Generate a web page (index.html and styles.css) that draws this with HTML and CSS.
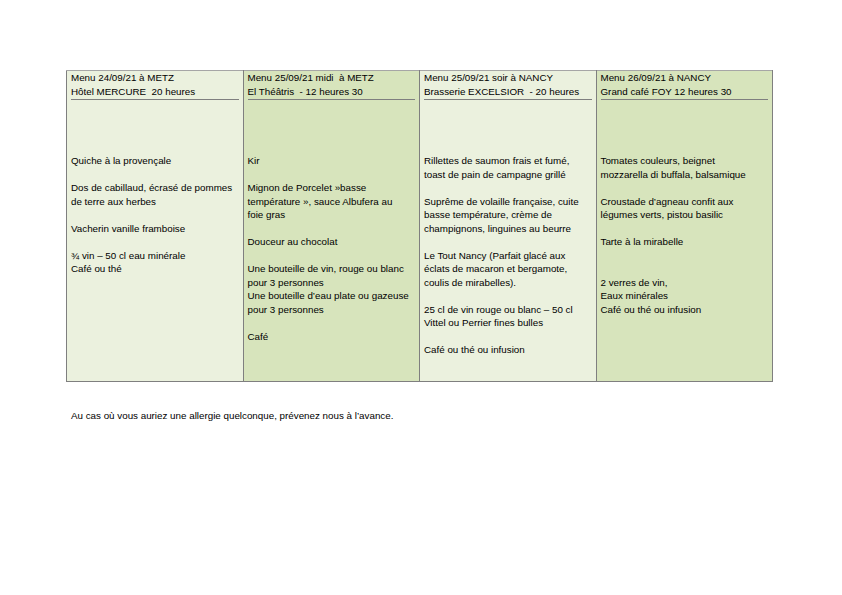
FILE: index.html
```html
<!DOCTYPE html>
<html lang="fr">
<head>
<meta charset="utf-8">
<title>Menus</title>
<link rel="stylesheet" href="styles.css">
</head>
<body>
<div class="page">
  <table class="menus">
    <tr>
      <td class="light">
        <div class="head"><div>Menu 24/09/21 à METZ</div><div>Hôtel MERCURE&nbsp; 20 heures</div></div>
        <div class="body">
          <div>Quiche à la provençale</div>
          <div class="blank"></div>
          <div>Dos de cabillaud, écrasé de pommes</div>
          <div>de terre aux herbes</div>
          <div class="blank"></div>
          <div>Vacherin vanille framboise</div>
          <div class="blank"></div>
          <div>¾ vin – 50 cl eau minérale</div>
          <div>Café ou thé</div>
        </div>
      </td>
      <td class="dark">
        <div class="head"><div>Menu 25/09/21 midi&nbsp; à METZ</div><div>El Théâtris&nbsp; - 12 heures 30</div></div>
        <div class="body">
          <div>Kir</div>
          <div class="blank"></div>
          <div>Mignon de Porcelet »basse</div>
          <div>température », sauce Albufera au</div>
          <div>foie gras</div>
          <div class="blank"></div>
          <div>Douceur au chocolat</div>
          <div class="blank"></div>
          <div>Une bouteille de vin, rouge ou blanc</div>
          <div>pour 3 personnes</div>
          <div>Une bouteille d’eau plate ou gazeuse</div>
          <div>pour 3 personnes</div>
          <div class="blank"></div>
          <div>Café</div>
        </div>
      </td>
      <td class="light">
        <div class="head"><div>Menu 25/09/21 soir à NANCY</div><div>Brasserie EXCELSIOR&nbsp; - 20 heures</div></div>
        <div class="body">
          <div>Rillettes de saumon frais et fumé,</div>
          <div>toast de pain de campagne grillé</div>
          <div class="blank"></div>
          <div>Suprême de volaille française, cuite</div>
          <div>basse température, crème de</div>
          <div>champignons, linguines au beurre</div>
          <div class="blank"></div>
          <div>Le Tout Nancy (Parfait glacé aux</div>
          <div>éclats de macaron et bergamote,</div>
          <div>coulis de mirabelles).</div>
          <div class="blank"></div>
          <div>25 cl de vin rouge ou blanc – 50 cl</div>
          <div>Vittel ou Perrier fines bulles</div>
          <div class="blank"></div>
          <div>Café ou thé ou infusion</div>
        </div>
      </td>
      <td class="dark">
        <div class="head"><div>Menu 26/09/21 à NANCY</div><div>Grand café FOY 12 heures 30</div></div>
        <div class="body">
          <div>Tomates couleurs, beignet</div>
          <div>mozzarella di buffala, balsamique</div>
          <div class="blank"></div>
          <div>Croustade d’agneau confit aux</div>
          <div>légumes verts, pistou basilic</div>
          <div class="blank"></div>
          <div>Tarte à la mirabelle</div>
          <div class="blank"></div>
          <div class="blank"></div>
          <div>2 verres de vin,</div>
          <div>Eaux minérales</div>
          <div>Café ou thé ou infusion</div>
        </div>
      </td>
    </tr>
  </table>
  <p class="note">Au cas où vous auriez une allergie quelconque, prévenez nous à l’avance.</p>
</div>
</body>
</html>
```
FILE: styles.css
```css
html, body {
  margin: 0;
  padding: 0;
  background: #ffffff;
}
body {
  font-family: "Liberation Sans", Arial, sans-serif;
  font-size: 9.8px;
  color: #000000;
}
.page {
  padding: 70px 0 0 66px;
}
.menus {
  border-collapse: collapse;
  table-layout: fixed;
  width: 707px;
  height: 312px;
}
.menus td {
  vertical-align: top;
  border: 1px solid #7f7f7f;
  border-top-color: #a6a6a6;
  padding: 0 4px 0 4px;
  white-space: nowrap;
  overflow: hidden;
}
.light {
  background: #ebf1de;
}
.dark {
  background: #d7e4bc;
}
.head {
  line-height: 14px;
  border-bottom: 1px solid #7f7f7f;
}
.body {
  margin-top: 54px;
  line-height: 13.5px;
}
.blank {
  height: 13.5px;
}
.note {
  margin: 27px 0 0 5px;
  line-height: 13.5px;
}
```
